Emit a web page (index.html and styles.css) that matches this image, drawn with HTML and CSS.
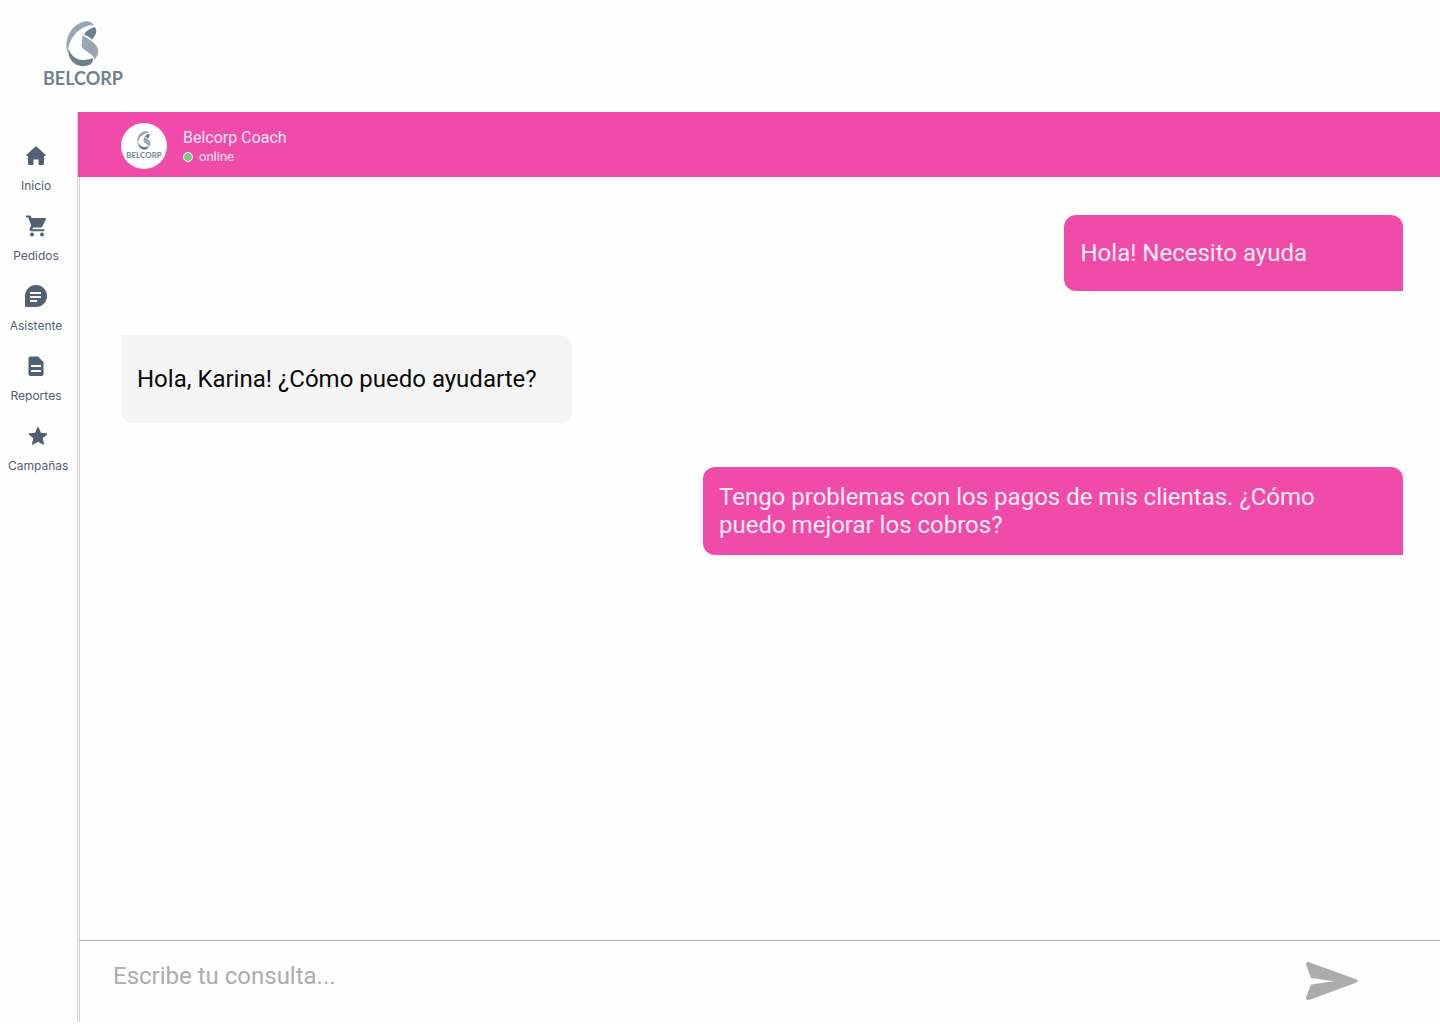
FILE: index.html
```html
<!DOCTYPE html>
<html lang="es">
<head>
  <meta charset="UTF-8">
  <meta name="viewport" content="width=device-width, initial-scale=1.0">
  <title>Belcorp Coach</title>
  <link rel="stylesheet" href="styles.css">
</head>
<body>

  <svg class="sprite" aria-hidden="true">
    <symbol id="belcorp" viewBox="0 0 33 46">
      <path fill="#9aa7b2" d="M28 4C25 0 20-1 14 2C5 6 0 16 .5 26C.6 29 1 30 2 31C2 24 5 18 10 12C15 7 21 4 28 4Z"/>
      <path fill="#6b7f8d" d="M29 6C31 9 31 13 26 18.500Q22 15 18 13.500Q21 8 29 6Z"/>
      <path fill="#9aa7b2" d="M16.500 14C20 17 30 21 32 28C33 32 31 36 28.500 39C29 34 21 32 15.500 26Z"/>
      <path fill="#6b7f8d" d="M2.500 28C6 37 14 42 27 37C27 40 26 42 25 43C20 46 13 46 8 42C3 38 2 33 2.500 28Z"/>
    </symbol>
  </svg>

  <header class="topbar">
    <a href="#" class="logo">
      <svg class="logo-mark"><use href="#belcorp"/></svg>
      <span class="logo-text">BELCORP</span>
    </a>
  </header>

  <div class="layout">
    <nav class="sidebar">
      <a href="#" class="nav-item">
        <svg viewBox="0 0 24 24"><path d="M11.200 2.800a1.200 1.200 0 0 1 1.600 0l8.700 8c.5.5.2 1.200-.5 1.200h-1v7.500a1.500 1.500 0 0 1-1.500 1.500H15.500a1 1 0 0 1-1-1v-4.500h-5v4.500a1 1 0 0 1-1 1H5.500A1.500 1.500 0 0 1 4 19.500V12H3c-.7 0-1-.7-.5-1.200z"/></svg>
        <span>Inicio</span>
      </a>
      <a href="#" class="nav-item">
        <svg viewBox="0 0 24 24"><path d="M3 1.500h3c.5 0 .8.300 1 .8L7.500 4H21c.8 0 1.200.7.800 1.400l-3.500 7c-.3.600-.9 1-1.600 1H9.200l-1 1.800h11.300a1 1 0 0 1 0 2H7.500c-1.600 0-2.500-1.500-1.800-2.900l1.500-2.600L4.300 3.500H3a1 1 0 0 1 0-2z"/><circle cx="8" cy="20.500" r="2"/><circle cx="18" cy="20.500" r="2"/></svg>
        <span>Pedidos</span>
      </a>
      <a href="#" class="nav-item">
        <svg viewBox="0 0 24 24"><path fill-rule="evenodd" d="M12 1a11 11 0 0 1 0 22H2.500A1.500 1.500 0 0 1 1 21.500V12A11 11 0 0 1 12 1zM6 8v2h11V8zM6 12v2h11v-2zM6 16v2h7v-2z"/></svg>
        <span>Asistente</span>
      </a>
      <a href="#" class="nav-item">
        <svg viewBox="0 0 24 24"><path fill-rule="evenodd" d="M6.500 2.500H14l5.500 5.500v12a2 2 0 0 1-2 2h-11a2 2 0 0 1-2-2V4.500a2 2 0 0 1 2-2zM7 11v2h10v-2zM7 16v2h10v-2z"/></svg>
        <span>Reportes</span>
      </a>
      <a href="#" class="nav-item">
        <svg viewBox="0 0 24 24"><path d="M11.300 3.500c.3-.7 1.100-.7 1.400 0l2.200 5.300 5.500.5c.8.1 1 .9.500 1.400l-4.200 3.600 1.300 5.400c.2.8-.5 1.300-1.200.9L12 17.700l-4.800 2.900c-.7.4-1.400-.1-1.200-.9l1.300-5.400-4.200-3.600c-.5-.5-.3-1.300.5-1.400l5.500-.5z"/></svg>
        <span>Campañas</span>
      </a>
    </nav>

    <main class="chat">
      <div class="chat-header">
        <div class="avatar">
          <svg class="avatar-mark"><use href="#belcorp"/></svg>
          <span class="avatar-text">BELCORP</span>
        </div>
        <div>
          <h1 class="chat-name">Belcorp Coach</h1>
          <p class="status"><span class="dot"></span>online</p>
        </div>
      </div>

      <div class="messages">
        <p class="message sent short">Hola! Necesito ayuda</p>
        <p class="message received">Hola, Karina! ¿Cómo puedo ayudarte?</p>
        <p class="message sent">Tengo problemas con los pagos de mis clientas. ¿Cómo puedo mejorar los cobros?</p>
      </div>

      <form class="composer">
        <input type="text" class="composer-input" placeholder="Escribe tu consulta..." aria-label="Escribe tu consulta">
        <button type="button" class="send" aria-label="Enviar">
          <svg viewBox="0 0 52 38"><path d="M3 .2L50 17.200Q53.500 19 50 20.800L3 37.900Q-.8 38.500.2 35L5 22.500L28.500 19.300L5 16L.2 3Q-.5-.5 3 .2Z"/></svg>
        </button>
      </form>
    </main>
  </div>

</body>
</html>
```
FILE: styles.css
```css
* {
  box-sizing: border-box;
}

body {
  margin: 0;
  min-height: 100vh;
  display: flex;
  flex-direction: column;
  padding-bottom: 2px;
  background-color: #fefefe;
  font-family: Roboto, "Liberation Sans", sans-serif;
}

h1,
p {
  margin: 0;
  font-weight: 400;
}

.sprite {
  display: none;
}

/* Logo */
.topbar {
  height: 112px;
  padding: 21px 43px 0;
}

.logo {
  display: inline-flex;
  flex-direction: column;
  align-items: center;
  color: #708290;
  text-decoration: none;
}

.logo-mark {
  width: 33px;
  height: 46px;
}

.logo-text {
  font-family: Lato, sans-serif;
  font-size: 18px;
  font-weight: 700;
  line-height: 22px;
}

.layout {
  flex: 1;
  display: flex;
}

/* Sidebar */
.sidebar {
  width: 80px;
  flex-shrink: 0;
  display: flex;
  flex-direction: column;
  align-items: flex-start;
  gap: 20px;
  padding: 32px 0 0 8px;
  border-right: 3px double #d0d0d0;
}

.nav-item {
  min-width: 56px;
  display: flex;
  flex-direction: column;
  align-items: center;
  gap: 10px;
  color: #526075;
  font-family: Inter, sans-serif;
  font-size: 12px;
  line-height: 16px;
  text-decoration: none;
}

.nav-item svg {
  width: 24px;
  height: 24px;
  fill: #526075;
}

/* Chat */
.chat {
  flex: 1;
  min-width: 0;
  display: flex;
  flex-direction: column;
}

.chat-header {
  display: flex;
  align-items: center;
  gap: 16px;
  height: 65px;
  margin-left: -2px;
  padding: 3px 43px 0;
  background-color: #f14ba9;
  color: #fde6f3;
}

.avatar {
  width: 46px;
  height: 46px;
  border-radius: 50%;
  background-color: #fff;
  display: flex;
  flex-direction: column;
  align-items: center;
  padding-top: 8px;
}

.avatar-mark {
  width: 14px;
  height: 19px;
}

.avatar-text {
  font-family: Lato, sans-serif;
  font-size: 8px;
  font-weight: 700;
  line-height: 10px;
  color: #708290;
}

.chat-name {
  padding-top: 2px;
  font-size: 16px;
  line-height: 20px;
}

.status {
  display: flex;
  align-items: center;
  gap: 6px;
  font-size: 13px;
  line-height: 18px;
}

.dot {
  width: 10px;
  height: 10px;
  border: 1px solid #fff;
  border-radius: 50%;
  background-color: #7cc788;
}

.messages {
  flex: 1;
  display: flex;
  flex-direction: column;
  align-items: flex-start;
  gap: 44px;
  padding: 38px 37px 38px 41px;
}

.message {
  max-width: 700px;
  padding: 16px;
  border-radius: 12px;
  font-size: 24px;
  line-height: 28px;
}

.sent {
  align-self: flex-end;
  padding-right: 64px;
  border-bottom-right-radius: 0;
  background-color: #f14ba9;
  color: #fdebf5;
}

.short {
  padding: 24px 96px 24px 16px;
}

.received {
  padding: 30px 35px 30px 16px;
  border-top-left-radius: 0;
  background-color: #f5f5f5;
  color: #0a0a0a;
}

/* Message box */
.composer {
  display: flex;
  align-items: center;
  height: 82px;
  margin-left: -1px;
  padding: 0 82px 2px 34px;
  border-top: 1px solid #ababab;
}

.composer-input {
  flex: 1;
  min-width: 0;
  margin-bottom: 10px;
  padding: 0;
  border: none;
  outline: none;
  background: transparent;
  font-family: inherit;
  font-size: 24px;
  line-height: 28px;
}

.composer-input::placeholder {
  color: #adadad;
  opacity: 1;
}

.send {
  padding: 0;
  border: none;
  background: none;
  cursor: pointer;
}

.send svg {
  display: block;
  width: 52px;
  height: 38px;
  fill: #ababab;
}
```
